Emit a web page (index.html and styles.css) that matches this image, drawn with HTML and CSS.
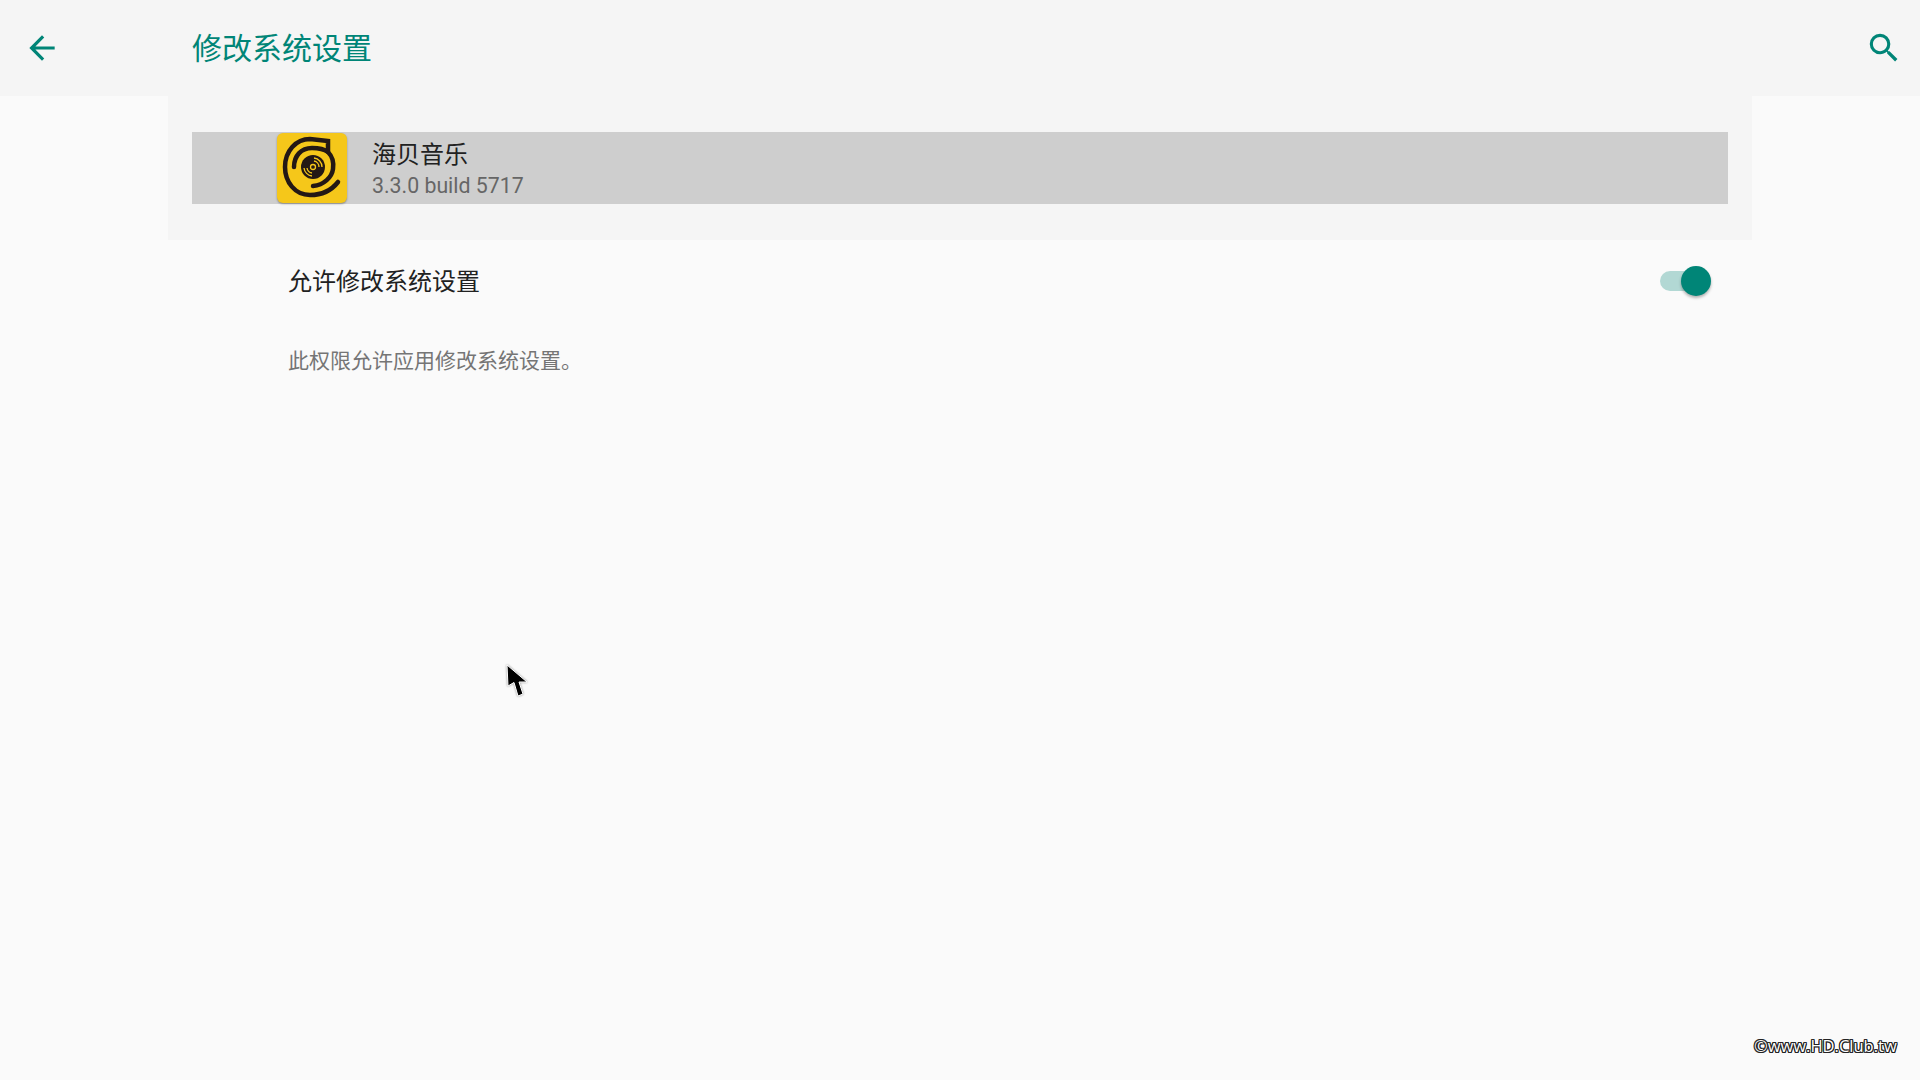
FILE: index.html
```html
<!DOCTYPE html>
<html lang="zh-CN">
<head>
    <meta charset="UTF-8">
    <title>修改系统设置</title>
    <link rel="stylesheet" href="styles.css">
</head>
<body>
    <header class="app-bar">
        <div class="nav-slot">
            <svg class="icon" viewBox="0 0 24 24" width="38" height="38"><path d="M20 11H7.830l5.590-5.590L12 4l-8 8 8 8 1.410-1.410L7.830 13H20v-2z"/></svg>
        </div>
        <h1 class="page-title">修改系统设置</h1>
        <div class="action-slot">
            <svg class="icon" viewBox="0 0 24 24" width="38" height="38"><path d="M15.500 14h-.790l-.280-.270A6.470 6.470 0 0 0 16 9.500 6.500 6.500 0 1 0 9.500 16c1.610 0 3.090-.590 4.230-1.570l.270.280v.790l5 4.990L20.490 19l-4.990-5zm-6 0C7.010 14 5 11.990 5 9.500S7.010 5 9.500 5 14 7.010 14 9.500 11.990 14 9.500 14z"/></svg>
        </div>
    </header>

    <section class="app-panel">
        <div class="app-row">
            <div class="app-icon">
                <svg viewBox="0 0 70 70" width="70" height="70">
                    <path class="disc-line" d="M61 49C54 58 43 62 33 62 18 62 8 49 8 34 8 18 19 6 33 6L51 8V19" fill="none"/>
                    <path class="disc-line" d="M17 34C17 23 24 15 35 15 41 15 47 16 51 19 55 23 57 29 56 36 55 44 47 52 36 53" fill="none"/>
                    <circle class="disc" cx="36" cy="34" r="12"/>
                    <path class="disc-groove" d="M37 25a9 9 0 0 1 8 9M27 35a9 9 0 0 0 8 8M37 28a6 6 0 0 1 5 6M30 35a6 6 0 0 0 5 5" fill="none"/>
                    <circle class="disc-groove" cx="36" cy="34" r="2.500" fill="none"/>
                </svg>
            </div>
            <div class="app-text">
                <div class="app-name">海贝音乐</div>
                <div class="app-version">3.3.0 build 5717</div>
            </div>
        </div>
    </section>

    <section class="setting">
        <div class="setting-row">
            <span class="setting-label">允许修改系统设置</span>
            <span class="switch"><span class="switch-thumb"></span></span>
        </div>
        <p class="setting-desc">此权限允许应用修改系统设置。</p>
    </section>

    <svg class="cursor" viewBox="0 0 24 32" width="24" height="32"><path d="M3 1L4 22 10 18.500 14 32 19 30 15 18H23z" fill="#000" stroke="#fff" stroke-width="1"/></svg>
    <div class="watermark">©www.HD.Club.tw</div>
</body>
</html>
```
FILE: styles.css
```css
* {
    box-sizing: border-box;
}

html,
body {
    height: 100%;
}

body {
    margin: 0;
    background: #fafafa;
    font-family: Roboto, "Noto Sans CJK SC", sans-serif;
    overflow: hidden;
}

.app-bar {
    display: flex;
    align-items: center;
    height: 96px;
    background: #f5f5f5;
}

.nav-slot {
    width: 192px;
    padding-left: 23px;
    display: flex;
}

.icon {
    fill: #008577;
}

.page-title {
    flex: 1;
    margin: 0;
    padding-bottom: 4px;
    font-size: 30px;
    font-weight: 400;
    color: #008577;
}

.action-slot {
    padding-right: 17px;
    display: flex;
}

.app-panel {
    margin: 0 168px;
    padding: 36px 24px;
    background: #f5f5f5;
}

.app-row {
    display: flex;
    align-items: center;
    gap: 25px;
    height: 72px;
    padding-left: 85px;
    background: #cecece;
}

.app-icon {
    width: 70px;
    height: 70px;
    border-radius: 6px;
    background: #f5c71a;
    box-shadow: 0 1px 2px rgba(0, 0, 0, 0.35);
}

.app-icon svg {
    display: block;
}

.disc-line {
    stroke: #231815;
    stroke-width: 4.500;
    stroke-linecap: round;
}

.disc {
    fill: #231815;
}

.disc-groove {
    stroke: #f5c71a;
    stroke-width: 1.300;
}

.app-text {
    display: flex;
    flex-direction: column;
    padding-top: 1px;
}

.app-name {
    font-size: 24px;
    line-height: 34px;
    color: #212121;
}

.app-version {
    font-size: 21.300px;
    line-height: 28px;
    color: #666;
}

.setting {
    margin: 0 192px 0 288px;
}

.setting-row {
    display: flex;
    align-items: center;
    justify-content: space-between;
    height: 82px;
}

.setting-label {
    padding-bottom: 4px;
    font-size: 24px;
    color: #212121;
}

.switch {
    position: relative;
    width: 42px;
    height: 20px;
    margin-right: 26px;
    border-radius: 10px;
    background: #b2d8d4;
}

.switch-thumb {
    position: absolute;
    top: -5px;
    right: -9px;
    width: 30px;
    height: 30px;
    border-radius: 50%;
    background: #008577;
    box-shadow: 0 2px 3px rgba(0, 0, 0, 0.3);
}

.setting-desc {
    margin: 24px 0 0;
    font-size: 21px;
    line-height: 30px;
    color: #757575;
}

.cursor {
    position: absolute;
    left: 504px;
    top: 664px;
    overflow: visible;
    filter: drop-shadow(0 0 1px rgba(0, 0, 0, 0.4));
}

.watermark {
    position: absolute;
    left: 1754px;
    top: 1035px;
    font-family: "Open Sans", sans-serif;
    font-size: 16.500px;
    line-height: 22px;
    color: #fff;
    text-shadow: -1px 0 #222, 1px 0 #222, 0 -1px #222, 0 1px #222, -1px -1px #222, 1px 1px #222, 1px -1px #222, -1px 1px #222;
}
```
